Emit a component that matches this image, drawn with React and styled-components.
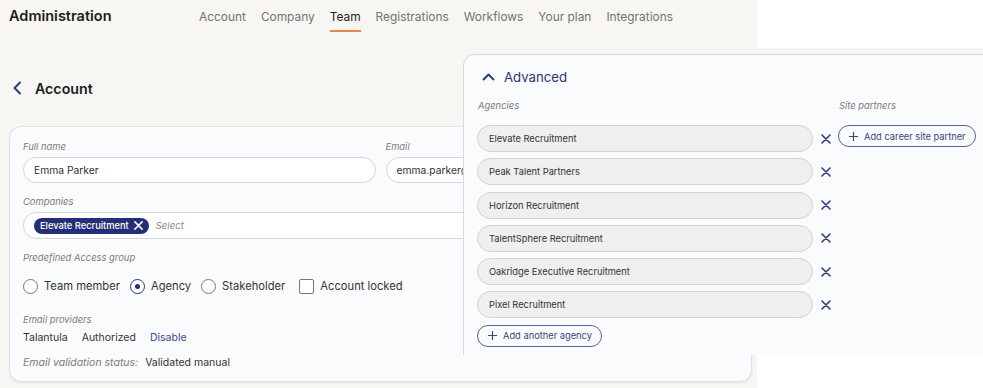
import styled, { createGlobalStyle } from "styled-components";

const GlobalStyle = createGlobalStyle`
  body {
    margin: 0;
    background: #ffffff;
    font-family: Inter, "Noto Sans", sans-serif;
    color: #262626;
  }
`;

const navItems = ["Account", "Company", "Team", "Registrations", "Workflows", "Your plan", "Integrations"];
const agencies = [
  "Elevate Recruitment",
  "Peak Talent Partners",
  "Horizon Recruitment",
  "TalentSphere Recruitment",
  "Oakridge Executive Recruitment",
  "Pixel Recruitment",
];

const XIcon = ({ size = 10, color = "#2f3a7c", width = 1.6 }) => (
  <svg width={size} height={size} viewBox="0 0 10 10">
    <path d="M1 1L9 9M9 1L1 9" stroke={color} strokeWidth={width} strokeLinecap="round" />
  </svg>
);

const PlusIcon = () => (
  <svg width="9" height="9" viewBox="0 0 10 10">
    <path d="M5 0.5V9.5M0.5 5H9.5" stroke="#3a4580" strokeWidth="1.3" strokeLinecap="round" />
  </svg>
);

const App = () => {
  return (
    <>
      <GlobalStyle />
      <Page>
        <Header>
          <Title>Administration</Title>
          <Nav>
            {navItems.map((item) => (
              <NavItem key={item} $active={item === "Team"}>
                {item}
              </NavItem>
            ))}
          </Nav>
        </Header>

        <BackRow>
          <svg width="10" height="14" viewBox="0 0 10 14">
            <path d="M8 1.5L2.5 7L8 12.5" stroke="#2d3a7c" strokeWidth="2" fill="none" strokeLinecap="round" strokeLinejoin="round" />
          </svg>
          <PageTitle>Account</PageTitle>
        </BackRow>

        <Card>
          <FieldGrid>
            <Field>
              <Label>Full name</Label>
              <Input>Emma Parker</Input>
            </Field>
            <Field>
              <Label>Email</Label>
              <Input>emma.parker@elevate-recruitment.com</Input>
            </Field>
          </FieldGrid>

          <Field>
            <Label>Companies</Label>
            <MultiSelect>
              <Chip>
                Elevate Recruitment
                <XIcon size={9} color="#ffffff" width={1.7} />
              </Chip>
              <Placeholder>Select</Placeholder>
            </MultiSelect>
          </Field>

          <Field>
            <Label>Predefined Access group</Label>
            <OptionRow>
              <Option>
                <Radio />
                Team member
              </Option>
              <Option>
                <Radio $checked />
                Agency
              </Option>
              <Option>
                <Radio />
                Stakeholder
              </Option>
              <Option>
                <Checkbox />
                Account locked
              </Option>
            </OptionRow>
          </Field>

          <Field>
            <Label>Email providers</Label>
            <ProviderRow>
              <span>Talantula</span>
              <span>Authorized</span>
              <LinkText>Disable</LinkText>
            </ProviderRow>
          </Field>

          <StatusRow>
            <StatusLabel>Email validation status:</StatusLabel>
            <span>Validated manual</span>
          </StatusRow>
        </Card>
      </Page>

      <Overlay>
        <Panel>
          <PanelHeader>
            <svg width="13" height="8" viewBox="0 0 13 8">
              <path d="M1.5 6.5L6.5 1.5L11.5 6.5" stroke="#2a3674" strokeWidth="1.8" fill="none" strokeLinecap="round" strokeLinejoin="round" />
            </svg>
            Advanced
          </PanelHeader>
          <Columns>
            <Column>
              <Label>Agencies</Label>
              <AgencyList>
                {agencies.map((a) => (
                  <AgencyRow key={a}>
                    <AgencyInput>{a}</AgencyInput>
                    <XIcon />
                  </AgencyRow>
                ))}
                <OutlineButton>
                  <PlusIcon />
                  Add another agency
                </OutlineButton>
              </AgencyList>
            </Column>
            <Column>
              <Label>Site partners</Label>
              <AgencyList>
                <OutlineButton>
                  <PlusIcon />
                  Add career site partner
                </OutlineButton>
              </AgencyList>
            </Column>
          </Columns>
        </Panel>
      </Overlay>
    </>
  );
};

const Page = styled.div`
  width: 757px;
  height: 388px;
  background: #f7f6f2;
  overflow: hidden;
`;

const Header = styled.div`
  display: flex;
  align-items: flex-start;
  height: 34px;
  padding: 0 9px;
`;

const Title = styled.div`
  font-size: 14.5px;
  font-weight: 600;
  color: #1c1c1c;
  line-height: 34px;
  margin-top: -1px;
  width: 190px;
`;

const Nav = styled.div`
  display: flex;
  gap: 15px;
`;

const NavItem = styled.div`
  font-size: 11.9px;
  color: ${(p) => (p.$active ? "#1f1f1f" : "#737373")};
  padding-top: 9px;
  padding-bottom: 5px;
  line-height: 16px;
  border-bottom: 2px solid ${(p) => (p.$active ? "#e8844d" : "transparent")};
`;

const BackRow = styled.div`
  display: flex;
  align-items: center;
  gap: 13px;
  padding-left: 12px;
  margin-top: 45px;
  height: 18px;
`;

const PageTitle = styled.div`
  font-size: 14.2px;
  font-weight: 600;
  color: #1c1c1c;
`;

const Card = styled.div`
  margin: 29px 5px 0 9px;
  height: 256px;
  box-sizing: border-box;
  background: #f9fbfd;
  border: 1px solid #dfe2e8;
  border-radius: 12px;
  box-shadow: 0 1px 2px rgba(0, 0, 0, 0.08);
  padding: 14px 13px 0;
  display: flex;
  flex-direction: column;
`;

const FieldGrid = styled.div`
  display: grid;
  grid-template-columns: 1fr 1fr;
  gap: 10px;
`;

const Field = styled.div`
  display: flex;
  flex-direction: column;
  margin-bottom: 13px;
`;

const Label = styled.div`
  font-size: 9.4px;
  font-style: italic;
  color: #7b7b7b;
  line-height: 12px;
  margin-bottom: 4px;
`;

const Input = styled.div`
  height: 26px;
  box-sizing: border-box;
  background: #ffffff;
  border: 1px solid #d3d6dc;
  border-radius: 13px;
  padding: 0 10px;
  font-size: 10.3px;
  color: #333;
  display: flex;
  align-items: center;
  white-space: nowrap;
  overflow: hidden;
`;

const MultiSelect = styled(Input)`
  height: 27px;
  padding: 0 10px;
  gap: 7px;
`;

const Chip = styled.div`
  display: flex;
  align-items: center;
  gap: 5px;
  height: 16px;
  padding: 0 6px;
  border-radius: 8px;
  background: #233079;
  color: #ffffff;
  font-size: 9.3px;
  font-weight: 500;
`;

const Placeholder = styled.span`
  font-style: italic;
  color: #8a8a8a;
  font-size: 9.6px;
`;

const OptionRow = styled.div`
  display: flex;
  align-items: center;
  gap: 10px;
  height: 30px;
  margin-top: 3px;
`;

const Option = styled.div`
  display: flex;
  align-items: center;
  gap: 6px;
  font-size: 11.2px;
  color: #333;
`;

const Radio = styled.span`
  width: 15px;
  height: 15px;
  box-sizing: border-box;
  border-radius: 50%;
  border: 1px solid ${(p) => (p.$checked ? "#2b3679" : "#777")};
  background: #fff;
  display: flex;
  align-items: center;
  justify-content: center;
  &::after {
    content: "";
    width: 5px;
    height: 5px;
    border-radius: 50%;
    background: ${(p) => (p.$checked ? "#233079" : "transparent")};
  }
`;

const Checkbox = styled.span`
  width: 15px;
  height: 15px;
  box-sizing: border-box;
  border: 1px solid #777;
  border-radius: 2px;
  background: #fff;
  margin-left: 4px;
`;

const ProviderRow = styled.div`
  display: flex;
  gap: 14px;
  font-size: 10.5px;
  color: #333;
  line-height: 14px;
  margin-top: 1px;
`;

const LinkText = styled.span`
  color: #3e4a8e;
`;

const StatusRow = styled.div`
  display: flex;
  gap: 7px;
  font-size: 10.5px;
  color: #333;
  margin-top: -2px;
`;

const StatusLabel = styled.span`
  font-style: italic;
  color: #7b7b7b;
`;

const Overlay = styled.div`
  position: absolute;
  top: 48px;
  left: 463px;
  right: 0;
  height: 307px;
  overflow: hidden;
  background: #f7f6f2;
  padding-top: 6px;
  box-sizing: border-box;
`;

const Panel = styled.div`
  height: 100%;
  box-sizing: border-box;
  background: #f9fbfd;
  border-top: 1px solid #d6dae1;
  border-left: 1px solid #d6dae1;
  border-top-left-radius: 12px;
  padding: 13px 0 0 13px;
`;

const PanelHeader = styled.div`
  display: flex;
  align-items: center;
  gap: 9px;
  padding-left: 5px;
  height: 18px;
  font-size: 13.2px;
  color: #2a3674;
  margin-bottom: 14px;
`;

const Columns = styled.div`
  display: flex;
  gap: 7px;
`;

const Column = styled.div`
  display: flex;
  flex-direction: column;
  & > ${Label} {
    margin-bottom: 13px;
    padding-left: 1px;
  }
`;

const AgencyList = styled.div`
  display: flex;
  flex-direction: column;
  align-items: flex-start;
  gap: 6.3px;
`;

const AgencyRow = styled.div`
  display: flex;
  align-items: center;
  gap: 8px;
`;

const AgencyInput = styled.div`
  width: 336px;
  height: 27px;
  box-sizing: border-box;
  background: #efefef;
  border: 1px solid #d2d2d2;
  border-radius: 13.5px;
  padding: 0 11px;
  font-size: 9.3px;
  color: #333;
  display: flex;
  align-items: center;
`;

const OutlineButton = styled.div`
  display: flex;
  align-items: center;
  gap: 6px;
  height: 22px;
  box-sizing: border-box;
  padding: 0 9px 0 10px;
  border: 1px solid #5a6296;
  border-radius: 11px;
  font-size: 9.3px;
  color: #3a4580;
  white-space: nowrap;
`;

export default App;
